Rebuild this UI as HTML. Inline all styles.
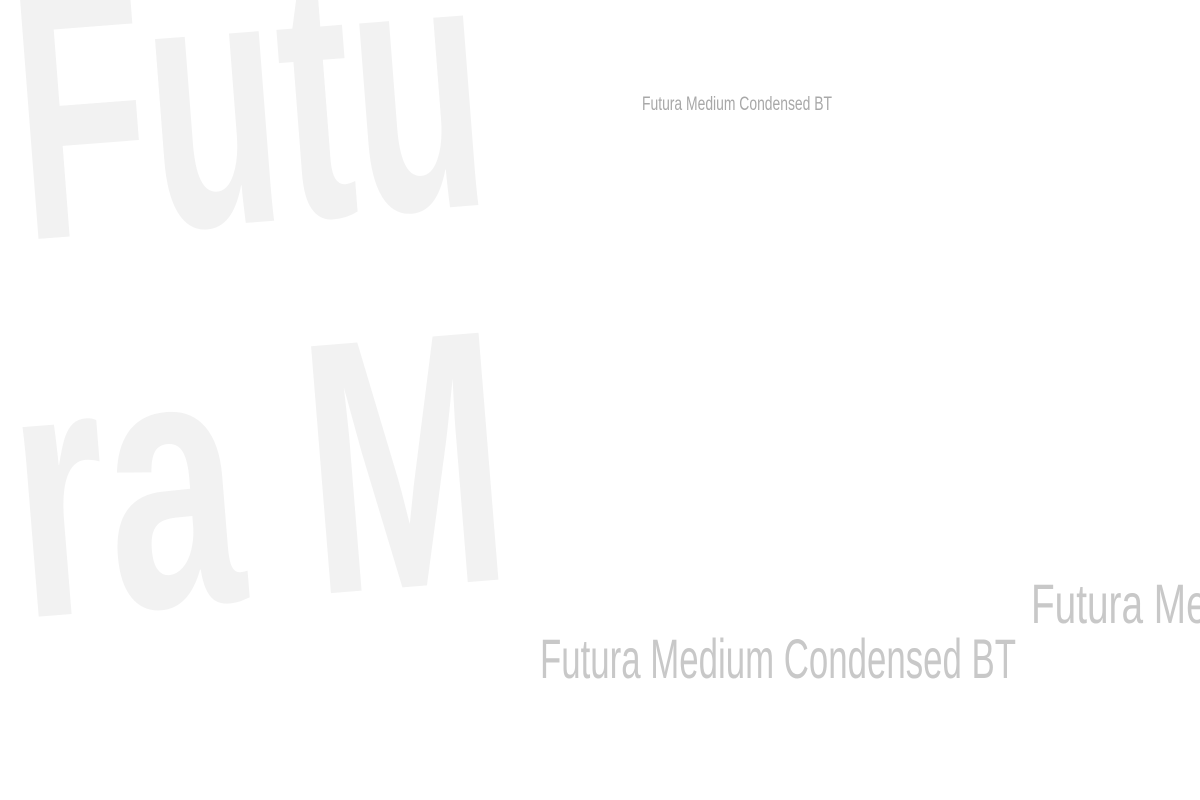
<!DOCTYPE html>
<html><head><meta charset="utf-8"><style>
html,body{margin:0;padding:0;background:#fff;width:1200px;height:800px;overflow:hidden}
svg{display:block}
text{font-family:"Liberation Sans",sans-serif}
</style></head><body>
<svg width="1200" height="800" viewBox="0 0 1200 800">
<g fill="#f2f2f2" font-size="360" font-weight="bold">
<text x="24" y="240" textLength="470" lengthAdjust="spacingAndGlyphs" transform="rotate(-4.4 24 240)">Futu</text>
<text x="22" y="618" textLength="494" lengthAdjust="spacingAndGlyphs" transform="rotate(-4.6 22 618)">ra M</text>
</g>
<text x="642" y="110" font-size="19" fill="#a8a8a8" textLength="190" lengthAdjust="spacingAndGlyphs">Futura Medium Condensed BT</text>
<text x="540" y="678" font-size="56" fill="#c8c8c8" textLength="476" lengthAdjust="spacingAndGlyphs">Futura Medium Condensed BT</text>
<text x="1031" y="623" font-size="56" fill="#c8c8c8" textLength="530" lengthAdjust="spacingAndGlyphs">Futura Medium Condensed BT</text>
</svg>
</body></html>
